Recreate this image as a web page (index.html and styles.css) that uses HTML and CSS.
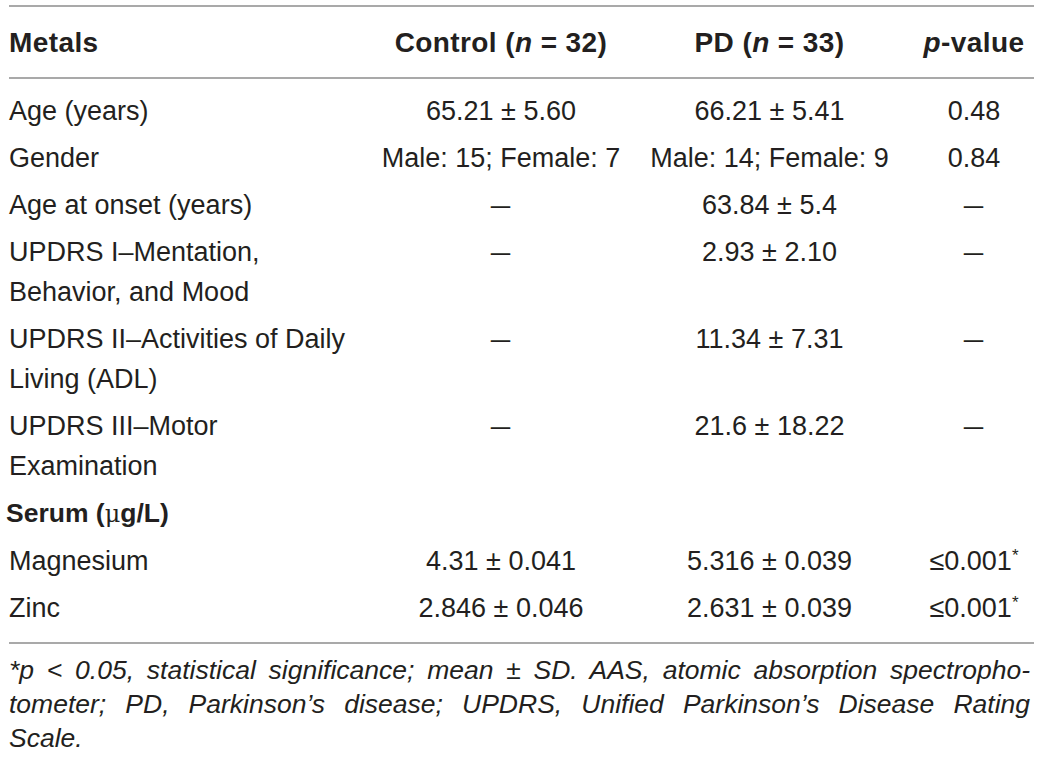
FILE: index.html
```html
<!DOCTYPE html>
<html lang="en">
<head>
<meta charset="utf-8">
<title>Metals table</title>
<link rel="stylesheet" href="styles.css">
</head>
<body>
<div class="page">
  <table class="data">
    <colgroup>
      <col class="c1"><col class="c2"><col class="c3"><col class="c4">
    </colgroup>
    <thead>
      <tr>
        <th class="left">Metals</th>
        <th>Control (<i>n</i> = 32)</th>
        <th>PD (<i>n</i> = 33)</th>
        <th><i>p</i>-value</th>
      </tr>
    </thead>
    <tbody>
      <tr class="first"><td class="left">Age (years)</td><td>65.21 ± 5.60</td><td>66.21 ± 5.41</td><td>0.48</td></tr>
      <tr><td class="left">Gender</td><td>Male: 15; Female: 7</td><td>Male: 14; Female: 9</td><td>0.84</td></tr>
      <tr><td class="left">Age at onset (years)</td><td><span class="dash">–</span></td><td>63.84 ± 5.4</td><td><span class="dash">–</span></td></tr>
      <tr><td class="left">UPDRS I–Mentation,<br>Behavior, and Mood</td><td><span class="dash">–</span></td><td>2.93 ± 2.10</td><td><span class="dash">–</span></td></tr>
      <tr><td class="left">UPDRS II–Activities of Daily<br>Living (ADL)</td><td><span class="dash">–</span></td><td>11.34 ± 7.31</td><td><span class="dash">–</span></td></tr>
      <tr><td class="left">UPDRS III–Motor<br>Examination</td><td><span class="dash">–</span></td><td>21.6 ± 18.22</td><td><span class="dash">–</span></td></tr>
      <tr><td class="left section" colspan="4">Serum (<span class="mu">μ</span>g/L)</td></tr>
      <tr><td class="left">Magnesium</td><td>4.31 ± 0.041</td><td>5.316 ± 0.039</td><td>≤0.001<sup>*</sup></td></tr>
      <tr class="last"><td class="left">Zinc</td><td>2.846 ± 0.046</td><td>2.631 ± 0.039</td><td>≤0.001<sup>*</sup></td></tr>
    </tbody>
  </table>
  <div class="note">
    <span class="jline">*p &lt; 0.05, statistical significance; mean ± SD. AAS, atomic absorption spectropho-</span>
    <span class="jline">tometer; PD, Parkinson’s disease; UPDRS, Unified Parkinson’s Disease Rating</span>
    <span class="lline">Scale.</span>
  </div>
</div>
</body>
</html>
```

FILE: styles.css
```css
html, body {
  margin: 0;
  padding: 0;
  background: #ffffff;
}

body {
  font-family: "Liberation Sans", Arial, Helvetica, sans-serif;
  color: #231f20;
}

.page {
  width: 1025px;
  padding: 5px 0 0 9px;
}

.data {
  width: 1025px;
  table-layout: fixed;
  border-collapse: collapse;
  border-top: 2px solid #a9a9a9;
  border-bottom: 2px solid #a9a9a9;
}

.c1 { width: 368px; }
.c2 { width: 248px; }
.c3 { width: 289px; }
.c4 { width: 120px; }

.data th,
.data td {
  padding: 0;
  text-align: center;
  vertical-align: top;
  white-space: nowrap;
}

.data .left {
  text-align: left;
}

.data thead th {
  font-size: 28px;
  font-weight: bold;
  line-height: 40px;
  padding-top: 16px;
  padding-bottom: 14px;
  border-bottom: 2px solid #a9a9a9;
  letter-spacing: 0.4px;
}

.data tbody td {
  font-size: 27px;
  line-height: 40px;
  padding-top: 3px;
  padding-bottom: 4px;
}

.data tbody tr.first td {
  padding-top: 12px;
}

.data tbody tr.last td {
  padding-bottom: 14px;
}

.data td.section {
  font-weight: bold;
  font-size: 26.5px;
  text-indent: -3px;
}

.mu {
  font-weight: normal;
  font-family: "DejaVu Serif", serif;
  font-size: 24px;
}

.dash {
  display: inline-block;
  transform: scaleX(1.3);
}

.data sup {
  font-size: 17px;
  line-height: 0;
  vertical-align: 9px;
}

.note {
  width: 1021px;
  margin-top: 9px;
  font-size: 26.5px;
  line-height: 34px;
  font-style: italic;
}

.jline {
  display: block;
  text-align: justify;
  text-align-last: justify;
}

.lline {
  display: block;
  text-align: left;
}
```
